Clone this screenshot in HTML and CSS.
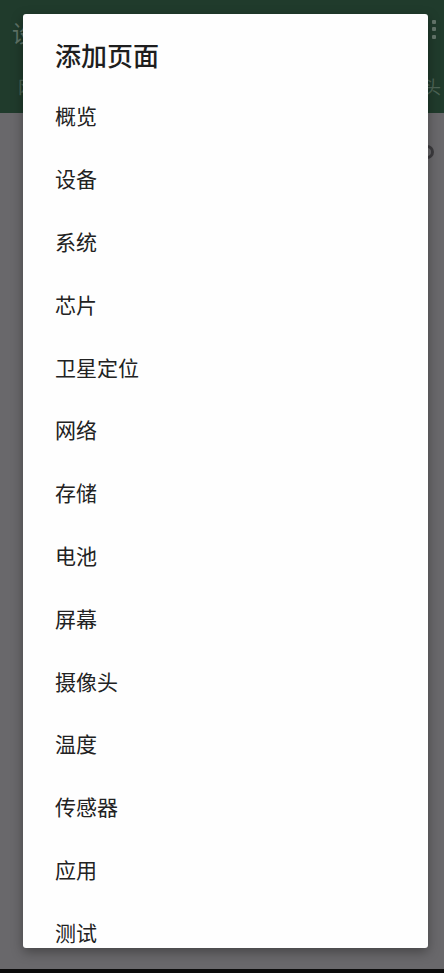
FILE: index.html
```html
<!DOCTYPE html>
<html lang="zh-CN">
<head>
<meta charset="utf-8">
<title>添加页面</title>
<link rel="stylesheet" href="styles.css">
</head>
<body>
<div class="screen">
  <header class="appbar">
    <div class="toolbar">
      <span class="app-title">设备信息</span>
      <span class="menu"><i></i><i></i><i></i></span>
    </div>
    <div class="tabs">
      <span>网络</span><span>存储</span><span>电池</span><span>屏幕</span><span>摄像头</span>
    </div>
  </header>
  <main class="content">
    <div class="content-row">
      <span class="row-icon"></span>
    </div>
  </main>
  <div class="navbar"></div>

  <div class="dialog">
    <h1 class="dialog-title">添加页面</h1>
    <ul class="dialog-list">
      <li>概览</li>
      <li>设备</li>
      <li>系统</li>
      <li>芯片</li>
      <li>卫星定位</li>
      <li>网络</li>
      <li>存储</li>
      <li>电池</li>
      <li>屏幕</li>
      <li>摄像头</li>
      <li>温度</li>
      <li>传感器</li>
      <li>应用</li>
      <li>测试</li>
    </ul>
  </div>
</div>
</body>
</html>
```

FILE: styles.css
```css
* { box-sizing: border-box; }
html, body {
  margin: 0;
  padding: 0;
  background: #000;
}
body {
  font-family: "Noto Sans CJK SC", "Noto Sans", sans-serif;
}
.screen {
  position: relative;
  width: 444px;
  height: 973px;
  display: flex;
  flex-direction: column;
  overflow: hidden;
}
.appbar {
  height: 113px;
  background: #203b2c;
  display: flex;
  flex-direction: column;
}
.toolbar {
  height: 62px;
  display: flex;
  align-items: center;
  justify-content: space-between;
  padding: 0 8px 0 12px;
}
.app-title {
  font-size: 23px;
  color: #5f7266;
  line-height: 1;
  margin-top: 2px;
}
.menu {
  display: flex;
  flex-direction: column;
  gap: 3.5px;
  margin-top: -4px;
}
.menu i {
  display: block;
  width: 4px;
  height: 4px;
  background: #64766b;
  border-radius: 1px;
}
.tabs {
  flex: 1;
  display: flex;
  align-items: center;
  justify-content: space-between;
  padding: 0 3px 4px 18px;
  font-size: 18px;
  color: #4d6456;
}
.content {
  flex: 1;
  background: #69686b;
  padding: 32px 10px 0;
}
.content-row {
  display: flex;
  justify-content: flex-end;
}
.row-icon {
  width: 14px;
  height: 14px;
  border-radius: 50%;
  border: 3px solid #3c3b3e;
}
.navbar {
  height: 4px;
  background: #0b0b0b;
}
.dialog {
  position: absolute;
  top: 14px;
  left: 23px;
  width: 405px;
  height: 934px;
  background: #fefefe;
  border-radius: 3px;
  box-shadow: 0 4px 12px rgba(0, 0, 0, 0.35);
  overflow: hidden;
  padding: 25px 0 0;
}
.dialog-title {
  margin: 0;
  padding: 0 32px;
  font-size: 26px;
  line-height: 32px;
  font-weight: 500;
  color: #1e1e1e;
}
.dialog-list {
  list-style: none;
  margin: 13.4px 0 0;
  padding: 0;
}
.dialog-list li {
  height: 62.8px;
  line-height: 62.8px;
  padding: 0 32px;
  font-size: 21px;
  color: #222;
}
```
